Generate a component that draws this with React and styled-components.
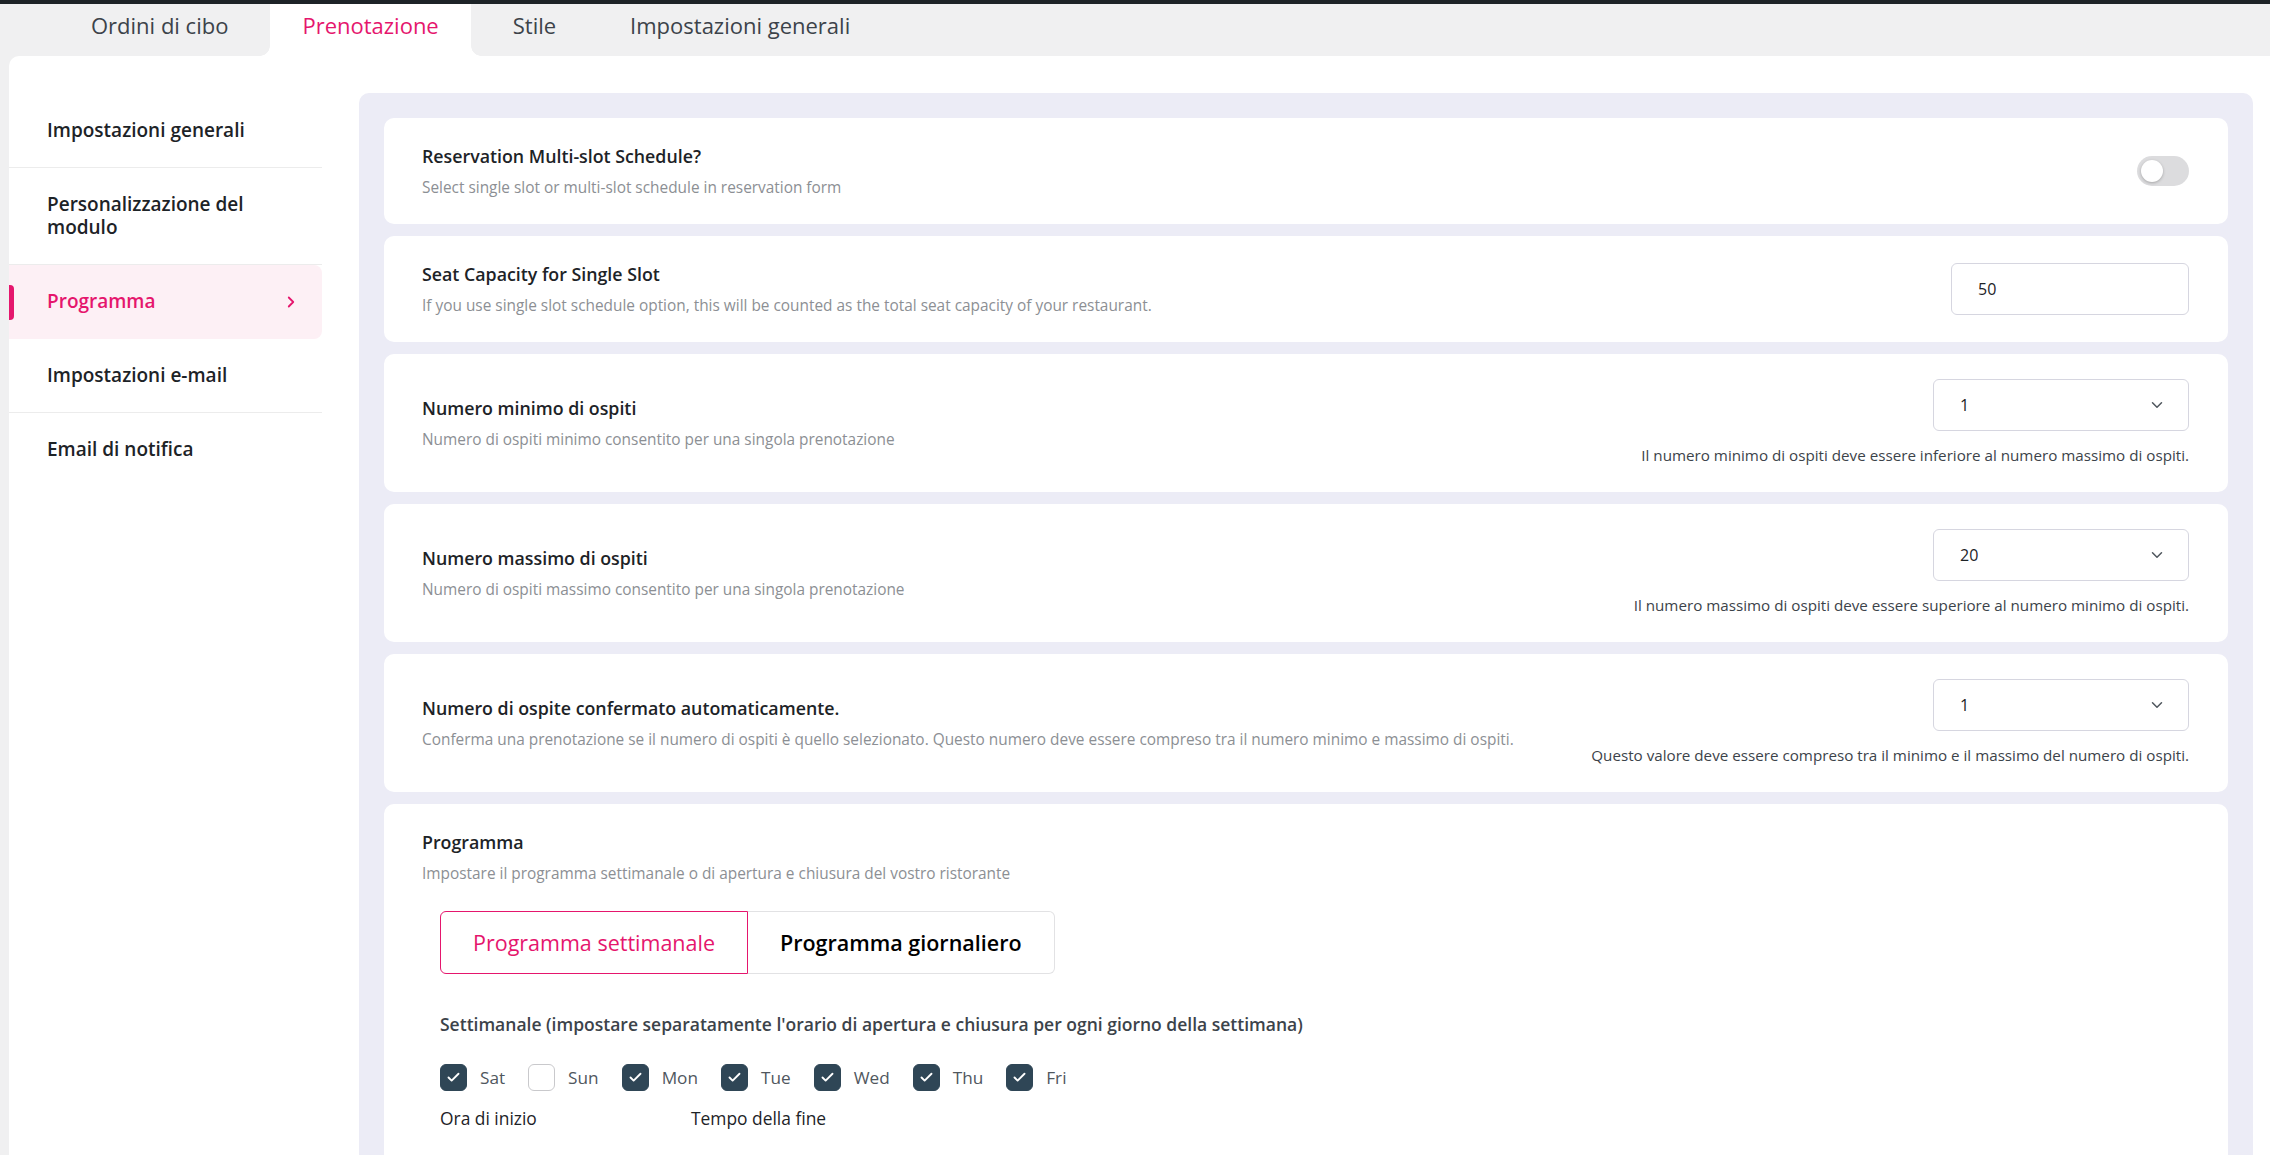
import React from "react";
import styled, { createGlobalStyle } from "styled-components";
import { ChevronDown, ChevronRight, Check } from "lucide-react";

const GlobalStyle = createGlobalStyle`
  html, body {
    margin: 0;
    padding: 0;
    overflow: hidden;
    background: #f0f0f1;
    font-family: "Open Sans", "Noto Sans", sans-serif;
    color: #1d2327;
  }
  * { box-sizing: border-box; }
`;

const pink = "#e5166d";

const Page = styled.div`
  min-height: 1155px;
  border-top: 4px solid #1d2327;
`;

const TabBar = styled.div`
  display: flex;
  gap: 10px;
  height: 52px;
  padding-left: 59px;
`;

const Tab = styled.div`
  position: relative;
  display: flex;
  align-items: center;
  padding: 0 32px 10px;
  font-size: 22px;
  font-weight: 500;
  color: ${(p) => (p.$active ? pink : "#3c434a")};
  background: ${(p) => (p.$active ? "#fff" : "transparent")};

  ${(p) =>
    p.$active &&
    `
    &::before, &::after {
      content: "";
      position: absolute;
      bottom: 0;
      width: 10px;
      height: 10px;
    }
    &::before {
      left: -10px;
      background: radial-gradient(circle at 0 0, #f0f0f1 9.5px, #fff 10px);
    }
    &::after {
      right: -10px;
      background: radial-gradient(circle at 100% 0, #f0f0f1 9.5px, #fff 10px);
    }
  `}
`;

const Panel = styled.div`
  margin-left: 9px;
  background: #fff;
  border-top-left-radius: 10px;
  display: flex;
  gap: 37px;
  padding: 37px 17px 0 0;
  min-height: 1100px;
`;

const Sidebar = styled.nav`
  width: 313px;
  flex-shrink: 0;
  display: flex;
  flex-direction: column;
  padding-top: 1px;
`;

const NavItem = styled.div`
  position: relative;
  display: flex;
  align-items: center;
  justify-content: space-between;
  padding: 25px 22px 25px 38px;
  font-size: 19px;
  line-height: 23px;
  font-weight: 600;
  color: ${(p) => (p.$active ? pink : "#1d2327")};
  background: ${(p) => (p.$active ? "#fdf0f5" : "transparent")};
  border-radius: ${(p) => (p.$active ? "0 8px 8px 0" : "0")};
  border-bottom: 1px solid ${(p) => (p.$line ? "#ececec" : "transparent")};

  ${(p) =>
    p.$active &&
    `
    &::before {
      content: "";
      position: absolute;
      left: 0;
      top: 20px;
      width: 5px;
      height: 35px;
      border-radius: 0 4px 4px 0;
      background: ${pink};
    }
  `}
`;

const NavLabel = styled.span`
  max-width: 220px;
`;

const Content = styled.main`
  flex: 1;
  background: #ececf6;
  border-radius: 10px;
  padding: 25px;
  display: flex;
  flex-direction: column;
  gap: 12px;
`;

const Card = styled.section`
  background: #fff;
  border-radius: 10px;
  padding: 25px 39px 25px 38px;
  display: flex;
  align-items: center;
  justify-content: space-between;
  gap: 40px;
`;

const TextBlock = styled.div`
  display: flex;
  flex-direction: column;
  gap: 8px;
`;

const Title = styled.h3`
  margin: 0;
  font-size: 17.8px;
  line-height: 26px;
  font-weight: 600;
  color: #1d2327;
`;

const Desc = styled.p`
  margin: 0;
  font-size: 15.4px;
  line-height: 22px;
  color: #8c8f94;
`;

const Toggle = styled.div`
  width: 52px;
  height: 30px;
  border-radius: 15px;
  background: #dcdcde;
  padding: 4px;
  display: flex;
  align-items: center;
`;

const Knob = styled.div`
  width: 22px;
  height: 22px;
  border-radius: 50%;
  background: #fff;
  box-shadow: 0 1px 3px rgba(0, 0, 0, 0.25);
`;

const Field = styled.div`
  width: ${(p) => p.$w}px;
  height: 52px;
  border: 1px solid #d6d6e0;
  border-radius: 6px;
  display: flex;
  align-items: center;
  justify-content: space-between;
  padding: 0 22px 0 ${(p) => p.$pl}px;
  font-size: 16px;
  color: #1d2327;
`;

const Side = styled.div`
  display: flex;
  flex-direction: column;
  align-items: flex-end;
  gap: 12px;
`;

const Helper = styled.div`
  font-size: 15.2px;
  line-height: 24px;
  color: #3c434a;
`;

const Section = styled.div`
  padding: 26px 0 90px 18px;
  display: flex;
  flex-direction: column;
`;

const Segmented = styled.div`
  display: flex;
`;

const SegButton = styled.div`
  height: 63px;
  display: flex;
  align-items: center;
  padding: 0 32px;
  font-size: 21.5px;
  font-weight: ${(p) => (p.$active ? 500 : 600)};
  color: ${(p) => (p.$active ? pink : "#000")};
  border: 1px solid ${(p) => (p.$active ? pink : "#e2e2e4")};
  border-left-width: ${(p) => (p.$active ? "1px" : "0")};
  border-radius: ${(p) => (p.$active ? "6px 0 0 6px" : "0 6px 6px 0")};
`;

const WeekHeading = styled.h4`
  margin: 38px 0 0;
  font-size: 17.5px;
  line-height: 24px;
  font-weight: 600;
  color: #3c434a;
`;

const Days = styled.div`
  display: flex;
  gap: 23px;
  margin-top: 28px;
`;

const Day = styled.label`
  display: flex;
  align-items: center;
  gap: 13px;
  font-size: 17.2px;
  color: #50575e;
`;

const Box = styled.span`
  width: 27px;
  height: 27px;
  border-radius: 6px;
  display: flex;
  align-items: center;
  justify-content: center;
  background: ${(p) => (p.$on ? "#2f4656" : "#fff")};
  border: 1px solid ${(p) => (p.$on ? "#2f4656" : "#c9c9cc")};
  color: #fff;
`;

const TimeLabels = styled.div`
  display: grid;
  grid-template-columns: 251px 251px;
  margin-top: 15px;
  font-size: 17.4px;
  line-height: 24px;
  color: #1d2327;
`;

const tabs = ["Ordini di cibo", "Prenotazione", "Stile", "Impostazioni generali"];

const nav = [
  { label: "Impostazioni generali", line: true },
  { label: "Personalizzazione del modulo", line: true },
  { label: "Programma", active: true },
  { label: "Impostazioni e-mail", line: true },
  { label: "Email di notifica" },
];

const selects = [
  {
    title: "Numero minimo di ospiti",
    desc: "Numero di ospiti minimo consentito per una singola prenotazione",
    value: "1",
    help: "Il numero minimo di ospiti deve essere inferiore al numero massimo di ospiti.",
  },
  {
    title: "Numero massimo di ospiti",
    desc: "Numero di ospiti massimo consentito per una singola prenotazione",
    value: "20",
    help: "Il numero massimo di ospiti deve essere superiore al numero minimo di ospiti.",
  },
  {
    title: "Numero di ospite confermato automaticamente.",
    desc: "Conferma una prenotazione se il numero di ospiti è quello selezionato. Questo numero deve essere compreso tra il numero minimo e massimo di ospiti.",
    value: "1",
    help: "Questo valore deve essere compreso tra il minimo e il massimo del numero di ospiti.",
  },
];

const days = [
  ["Sat", true],
  ["Sun", false],
  ["Mon", true],
  ["Tue", true],
  ["Wed", true],
  ["Thu", true],
  ["Fri", true],
];

export default function App() {
  return (
    <>
      <GlobalStyle />
      <Page>
        <TabBar>
          {tabs.map((t) => (
            <Tab key={t} $active={t === "Prenotazione"}>
              {t}
            </Tab>
          ))}
        </TabBar>

        <Panel>
          <Sidebar>
            {nav.map((n) => (
              <NavItem key={n.label} $active={n.active} $line={n.line}>
                <NavLabel>{n.label}</NavLabel>
                {n.active && <ChevronRight size={18} strokeWidth={2.4} />}
              </NavItem>
            ))}
          </Sidebar>

          <Content>
            <Card>
              <TextBlock>
                <Title>Reservation Multi-slot Schedule?</Title>
                <Desc>Select single slot or multi-slot schedule in reservation form</Desc>
              </TextBlock>
              <Toggle>
                <Knob />
              </Toggle>
            </Card>

            <Card>
              <TextBlock>
                <Title>Seat Capacity for Single Slot</Title>
                <Desc>
                  If you use single slot schedule option, this will be counted as the total seat
                  capacity of your restaurant.
                </Desc>
              </TextBlock>
              <Field $w={238} $pl={26}>50</Field>
            </Card>

            {selects.map((s) => (
              <Card key={s.title}>
                <TextBlock>
                  <Title>{s.title}</Title>
                  <Desc>{s.desc}</Desc>
                </TextBlock>
                <Side>
                  <Field $w={256} $pl={26}>
                    {s.value}
                    <ChevronDown size={18} strokeWidth={2} color="#50575e" />
                  </Field>
                  <Helper>{s.help}</Helper>
                </Side>
              </Card>
            ))}

            <Card as="div" style={{ display: "block" }}>
              <TextBlock>
                <Title>Programma</Title>
                <Desc>
                  Impostare il programma settimanale o di apertura e chiusura del vostro ristorante
                </Desc>
              </TextBlock>
              <Section>
                <Segmented>
                  <SegButton $active>Programma settimanale</SegButton>
                  <SegButton>Programma giornaliero</SegButton>
                </Segmented>
                <WeekHeading>
                  Settimanale (impostare separatamente l'orario di apertura e chiusura per ogni
                  giorno della settimana)
                </WeekHeading>
                <Days>
                  {days.map(([d, on]) => (
                    <Day key={d}>
                      <Box $on={on}>{on && <Check size={15} strokeWidth={3} />}</Box>
                      {d}
                    </Day>
                  ))}
                </Days>
                <TimeLabels>
                  <span>Ora di inizio</span>
                  <span>Tempo della fine</span>
                </TimeLabels>
              </Section>
            </Card>
          </Content>
        </Panel>
      </Page>
    </>
  );
}
